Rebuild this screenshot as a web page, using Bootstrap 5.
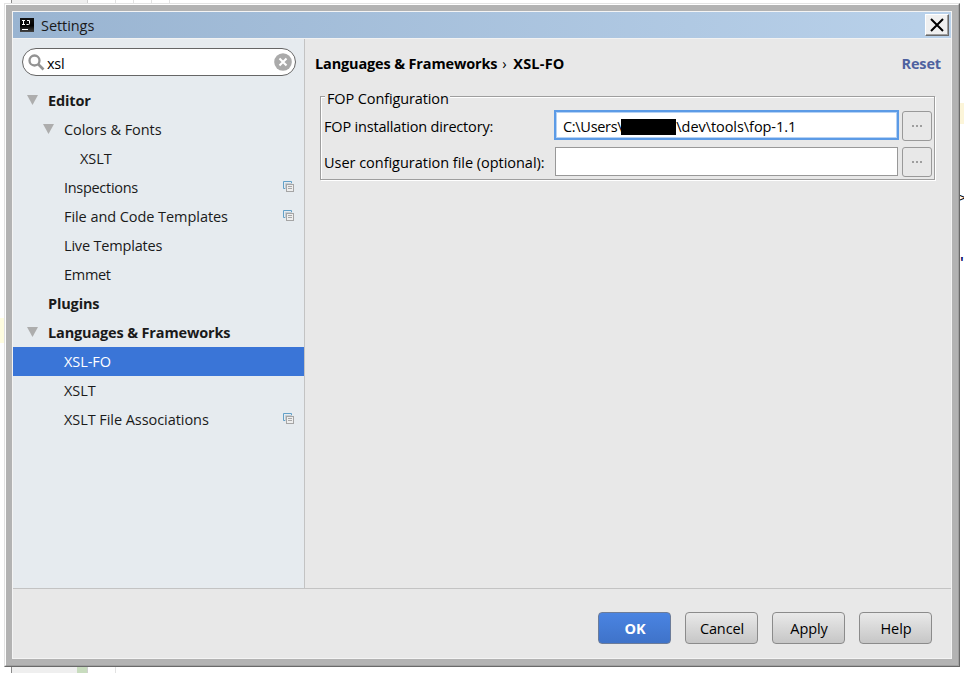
<!DOCTYPE html>
<html lang="en">
<head>
<meta charset="utf-8">
<meta name="viewport" content="width=device-width, initial-scale=1">
<title>Settings</title>
<link href="https://cdn.jsdelivr.net/npm/bootstrap@5.3.0/dist/css/bootstrap.min.css" rel="stylesheet">
<style>
body{width:964px;height:673px;background:#fff;color:#1a1a1a;font:14.5px/29px "Open Sans","Noto Sans",sans-serif;letter-spacing:-.06px}
svg{display:block;flex:none}
.fw-bold{letter-spacing:-.15px}
.snug{letter-spacing:-.3px}
.mid{letter-spacing:-.18px}
.loose{letter-spacing:-.03px}
.wide{letter-spacing:.2px}
/* editor visible behind the dialog */
.gutter{left:11px;width:77px;height:673px;background:#efefef;border-left:1px solid #8a8a8a;border-right:1px solid #d0d0d0}
.guide{width:1px;background:#e2e2e2}
.g1{left:115px;height:673px}.g2{left:133px;height:3px}.g3{left:151px;height:3px}.g4{left:169px;height:3px}
.change{left:77px;top:667px;width:10px;height:6px;background:#c8dcbe}
.caret-l{left:0;top:318px;width:4px;height:25px;background:#fffde0}
.caret-r{left:960px;top:103px;width:4px;height:21px;background:#fcf5d9}
.code{left:958px;font:13px/16px "Liberation Mono",monospace;color:#000}
.c1{top:191px}.c2{top:255px;font-weight:700;color:#000060}
/* dialog frame */
.dialog{left:4px;top:3px;width:956px;height:664px;border:1px solid;border-color:#e3e3e3 #696969 #696969 #e3e3e3;background:#b3b3b3}
.bevel{border:1px solid;border-color:#fff #a0a0a0 #a0a0a0 #fff;padding:6px}
.inner{border:1px solid #f4f4f4;background:#e8e8e8}
.titlebar{height:27px;background:linear-gradient(90deg,#99b4d1,#b9d1ea);border-bottom:1px solid #f2f2f2;padding:0 2px 0 7px}
.title{margin-left:7px}
.closebtn{width:24px;height:22px;background:#f0f0f0;border:1px solid;border-color:#fff #696969 #696969 #fff;box-shadow:inset -1px -1px #a0a0a0;padding:0}
.main{height:550px}
.side{width:292px;background:#e6ebef;border-right:1px solid #c3c3c3;padding-top:9px}
.search{height:28px;margin:0 8px 10px 9px;border:1px solid #666;border-radius:14px;background:#fff;padding:0 3px 0 5px;color:#000}
.query{padding:2px 0 0 2px}
.tree-row{height:29px;padding-right:10px}
.tree-row .copy{margin-bottom:2px}
.tree-row .arrow{width:11px;height:10px;margin-right:10px;margin-bottom:2px}
.l0{padding-left:14px}.l1{padding-left:30px}.p0{padding-left:35px}.p1{padding-left:51px}.p2{padding-left:67px}
.sel{background:#3a75d7;color:#fff}
.pane{padding:10px 9px 0 10px;color:#000}
.crumbs{height:29px;padding-right:1px}
.sep{width:16px;padding-right:2px}
.reset{color:#4e619f}
.group{margin:18px 6px 0 5px;height:84px;width:615px;border:1px solid #9e9e9e;box-shadow:1px 1px #fff,inset 1px 1px #fff}
.legend-text{margin:-12px 0 0 4px;padding:0 2px;width:125px;height:24px;line-height:27px;background:#e8e8e8;letter-spacing:-.12px}
.field-label{width:234px;padding-left:3px;line-height:31px}
.field{width:343px;height:29px;background:#fff;border:1px solid #989898;padding-left:7px;margin-right:4px}
.focus-field{height:28px;border-color:#5c9be6;box-shadow:0 0 0 1px #5c9be6,inset 0 0 0 1px #b5d2f5}
.focus-field span{padding-top:3px}
.r1{margin-top:2px;height:30px}.r2{margin-top:6px;height:30px}
.redact{width:55px;height:16px;background:#000;margin:3px 0 0 -1px}
.browse{width:30px;height:30px;border:1px solid #999;border-radius:3px;background:#e8e8e8;padding:0}
.foot{height:70px;border-top:1px solid #c3c3c3;padding:23px 19px 0 0;gap:14px}
.dlg-btn{width:73px;height:32px;padding:0 0 0 1px;border:1px solid #8b8b8b;border-radius:4px;background:linear-gradient(#e9e9e9,#c6c6c6);color:#000;font-size:14.5px;line-height:32px;letter-spacing:-.1px}
.primary{background:linear-gradient(#4a84e2,#3f73c9);border-color:#6c7c99;color:#fff;font-weight:700}
</style>
<script src="https://cdn.jsdelivr.net/npm/bootstrap@5.3.0/dist/js/bootstrap.bundle.min.js"></script>
</head>
<body class="position-relative overflow-hidden m-0">
<svg class="d-none"><defs>
<symbol id="copy" viewBox="0 0 11 11"><path d="M3 7.500H.5v-7h8V2" fill="none" stroke="#62a0c8"/><path d="M2.500 8V2.500H9" fill="none" stroke="#c0cdd6"/><rect x="3.500" y="3.500" width="7" height="7" fill="#eee" stroke="#a5a5a5"/><path d="M5 5.500h4M5 7.500h4" stroke="#a8a8a8"/></symbol>
<symbol id="tri" viewBox="0 0 11 10"><path d="M0 0h11L5.5 10z" fill="#adadad"/></symbol>
</defs></svg>
<div class="gutter position-absolute top-0"></div>
<div class="guide g1 position-absolute top-0"></div><div class="guide g2 position-absolute top-0"></div><div class="guide g3 position-absolute top-0"></div><div class="guide g4 position-absolute top-0"></div>
<div class="change position-absolute"></div><div class="caret-l position-absolute"></div><div class="caret-r position-absolute"></div>
<span class="code c1 position-absolute">&gt;</span><span class="code c2 position-absolute">'</span>

<div class="dialog position-absolute"><div class="bevel h-100"><div class="inner h-100 d-flex flex-column">
  <header class="titlebar d-flex align-items-center">
    <svg width="14" height="14" viewBox="0 0 14 14"><defs><linearGradient id="lg" x2="0" y2="1"><stop stop-color="#111"/><stop offset=".55" stop-color="#000"/><stop offset="1" stop-color="#444"/></linearGradient></defs><rect width="14" height="14" fill="url(#lg)"/><path d="M2 2.500h3M2 6.500h3M3.500 2.500v4M7 2.500h2.500V5.500q0 1-1 1H6.500M2 11.500h6" fill="none" stroke="#fff" stroke-width="1"/></svg>
    <span class="title me-auto">Settings</span>
    <button class="closebtn btn rounded-0 d-flex align-items-center justify-content-center" aria-label="Close"><svg width="14" height="14" viewBox="0 0 14 14"><path d="M1 1l12 12M13 1L1 13" stroke="#000" stroke-width="2"/></svg></button>
  </header>
  <div class="main d-flex">
    <nav class="side flex-shrink-0">
      <div class="search d-flex align-items-center">
        <svg width="17" height="17" viewBox="0 0 17 17"><circle cx="6.500" cy="6.500" r="5" fill="none" stroke="#939393" stroke-width="2.300"/><path d="M10 10l5.500 5.500" stroke="#939393" stroke-width="2.600"/></svg>
        <span class="query me-auto snug">xsl</span>
        <svg width="18" height="18" viewBox="0 0 18 18"><circle cx="9" cy="9" r="8.800" fill="#aaa"/><path d="M5.500 5.500l7 7M12.500 5.500l-7 7" stroke="#fff" stroke-width="2.100"/></svg>
      </div>
      <div class="tree-row l0 d-flex align-items-center fw-bold"><svg class="arrow"><use href="#tri"/></svg><span>Editor</span></div>
      <div class="tree-row l1 d-flex align-items-center"><svg class="arrow"><use href="#tri"/></svg><span>Colors &amp; Fonts</span></div>
      <div class="tree-row p2 d-flex align-items-center"><span>XSLT</span></div>
      <div class="tree-row p1 d-flex align-items-center"><span class="me-auto snug">Inspections</span><svg class="copy" width="11" height="11"><use href="#copy"/></svg></div>
      <div class="tree-row p1 d-flex align-items-center"><span class="me-auto">File and Code Templates</span><svg class="copy" width="11" height="11"><use href="#copy"/></svg></div>
      <div class="tree-row p1 d-flex align-items-center"><span class="mid">Live Templates</span></div>
      <div class="tree-row p1 d-flex align-items-center"><span class="snug">Emmet</span></div>
      <div class="tree-row p0 d-flex align-items-center fw-bold"><span>Plugins</span></div>
      <div class="tree-row l0 d-flex align-items-center fw-bold"><svg class="arrow"><use href="#tri"/></svg><span>Languages &amp; Frameworks</span></div>
      <div class="tree-row p1 d-flex align-items-center sel"><span>XSL-FO</span></div>
      <div class="tree-row p1 d-flex align-items-center"><span>XSLT</span></div>
      <div class="tree-row p1 d-flex align-items-center"><span class="me-auto">XSLT File Associations</span><svg class="copy" width="11" height="11"><use href="#copy"/></svg></div>
    </nav>
    <main class="pane flex-grow-1">
      <div class="crumbs d-flex fw-bold"><span>Languages &amp; Frameworks</span><span class="sep fw-normal text-center">›</span><span class="me-auto wide">XSL-FO</span><span class="reset">Reset</span></div>
      <section class="group">
        <div class="legend-text text-nowrap">FOP Configuration</div>
        <div class="r1 d-flex"><label class="field-label mid text-nowrap">FOP installation directory:</label><div class="field focus-field d-flex align-items-center"><span class="snug">C:\Users\</span><span class="redact"></span><span>\dev\tools\fop-1.1</span></div><button class="browse btn d-flex align-items-center justify-content-center" aria-label="Browse"><svg width="10" height="2"><path d="M0 1h2M4 1h2M8 1h2" stroke="#555" stroke-width="1.200"/></svg></button></div>
        <div class="r2 d-flex"><label class="field-label loose text-nowrap">User configuration file (optional):</label><div class="field"></div><button class="browse btn d-flex align-items-center justify-content-center" aria-label="Browse"><svg width="10" height="2"><path d="M0 1h2M4 1h2M8 1h2" stroke="#555" stroke-width="1.200"/></svg></button></div>
      </section>
    </main>
  </div>
  <footer class="foot d-flex justify-content-end">
    <button class="btn dlg-btn primary">OK</button><button class="btn dlg-btn">Cancel</button><button class="btn dlg-btn">Apply</button><button class="btn dlg-btn">Help</button>
  </footer>
</div></div></div>
</body>
</html>
